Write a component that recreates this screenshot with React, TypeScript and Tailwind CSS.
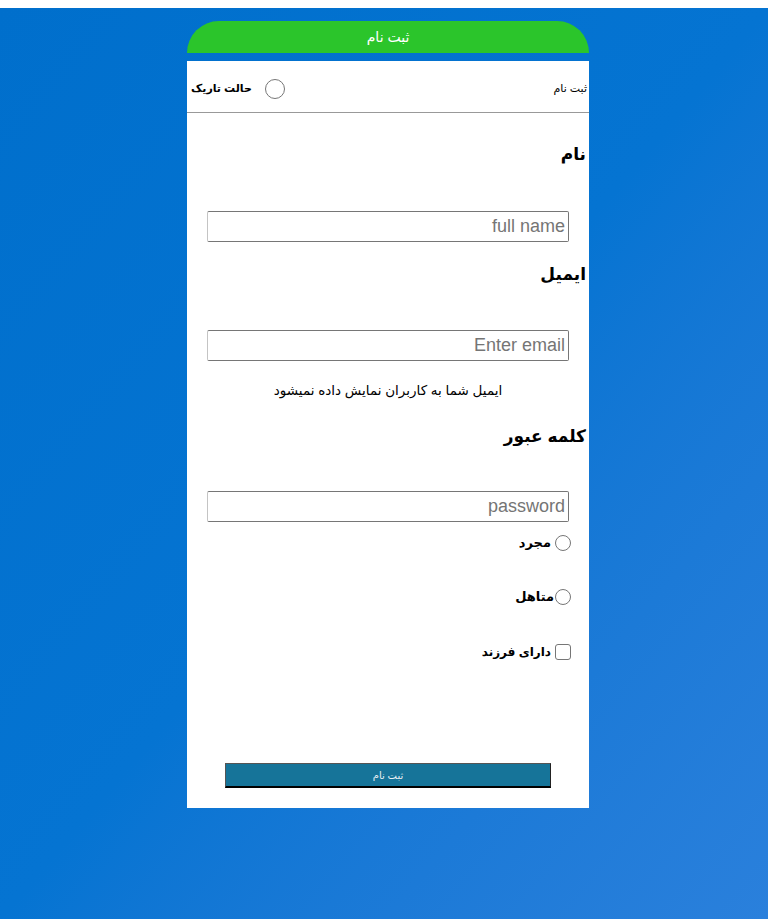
import { useState } from 'react';

const font = { fontFamily: '"Liberation Sans", "DejaVu Sans", sans-serif' };

function Field({ placeholder, type = 'text', className }: { placeholder: string; type?: string; className: string }) {
  return (
    <input
      type={type}
      placeholder={placeholder}
      className={`block mx-[20px] w-[362px] h-[31px] px-[3px] text-[18px] text-black placeholder:text-[#757575] border border-[#767676] border-l-[#c4c4c4] rounded-[2px] outline-none ${className}`}
    />
  );
}

export default function App() {
  const [status, setStatus] = useState('');
  const [kids, setKids] = useState(false);
  const [dark, setDark] = useState(false);

  return (
    <div className="min-h-screen bg-white pt-2" style={font}>
      <div className="min-h-[911px] bg-gradient-to-br from-[#006fcc] via-[#0574d2] to-[#2a80dc] pt-[13px]">
        <div dir="rtl" className="ml-[187px] w-[402px]">
          {/* title bar */}
          <div className="h-[32px] rounded-t-[32px] bg-[#2bc52b] text-white text-[14px] flex items-center justify-center">
            ثبت نام
          </div>

          {/* form card */}
          <div className="mt-2 h-[747px] bg-white text-black">
            <div className="h-[52px] border-b border-[#999] flex items-center justify-between pt-1 pr-[2px] pl-[4px]">
              <span className="text-[11px]">ثبت نام</span>
              <label className="flex items-center gap-[13px] text-[11px] font-bold">
                <input
                  type="radio"
                  checked={dark}
                  onChange={() => setDark(!dark)}
                  className="appearance-none w-[20px] h-[20px] rounded-full border border-[#767676] bg-white checked:bg-[#0075ff] m-0"
                />
                حالت تاریک
              </label>
            </div>

            <h3 className="mt-[30px] h-[24px] leading-[24px] text-[17px] font-bold pr-[3px]">نام</h3>
            <Field placeholder="full name" className="mt-[44px]" />

            <h3 className="mt-[21px] h-[24px] leading-[24px] text-[17px] font-bold pr-[3px]">ایمیل</h3>
            <Field placeholder="Enter email" type="email" className="mt-[43px]" />

            <p className="mt-[21px] h-[18px] leading-[18px] text-[13.5px] text-center">
              ایمیل شما به کاربران نمایش داده نمیشود
            </p>

            <h3 className="mt-[25px] h-[24px] leading-[24px] text-[17px] font-bold pr-[3px]">کلمه عبور</h3>
            <Field placeholder="password" type="password" className="mt-[42px]" />

            <label className="mt-[11px] h-[20px] mr-[18px] flex items-center gap-[4px] text-[13px] font-bold">
              <input
                type="radio"
                name="status"
                checked={status === 'single'}
                onChange={() => setStatus('single')}
                className="appearance-none w-[16px] h-[16px] rounded-full border border-[#767676] bg-white checked:bg-[#0075ff] m-0"
              />
              مجرد
            </label>

            <label className="mt-[34px] h-[20px] mr-[18px] flex items-center gap-[1px] text-[13px] font-bold">
              <input
                type="radio"
                name="status"
                checked={status === 'married'}
                onChange={() => setStatus('married')}
                className="appearance-none w-[16px] h-[16px] rounded-full border border-[#767676] bg-white checked:bg-[#0075ff] m-0"
              />
              متاهل
            </label>

            <label className="mt-[35px] h-[20px] mr-[18px] flex items-center gap-[4px] text-[12px] font-bold">
              <input
                type="checkbox"
                checked={kids}
                onChange={() => setKids(!kids)}
                className="appearance-none w-[16px] h-[16px] rounded-[3px] border border-[#767676] bg-white checked:bg-[#0075ff] m-0"
              />
              دارای فرزند
            </label>

            <button className="block mx-auto mt-[101px] w-[326px] h-[25px] bg-[#167499] text-[#e8f0f4] text-[10px] border border-[#555] border-b-2 border-b-black border-r-[#222]">
              ثبت نام
            </button>
          </div>
        </div>
      </div>
    </div>
  );
}
